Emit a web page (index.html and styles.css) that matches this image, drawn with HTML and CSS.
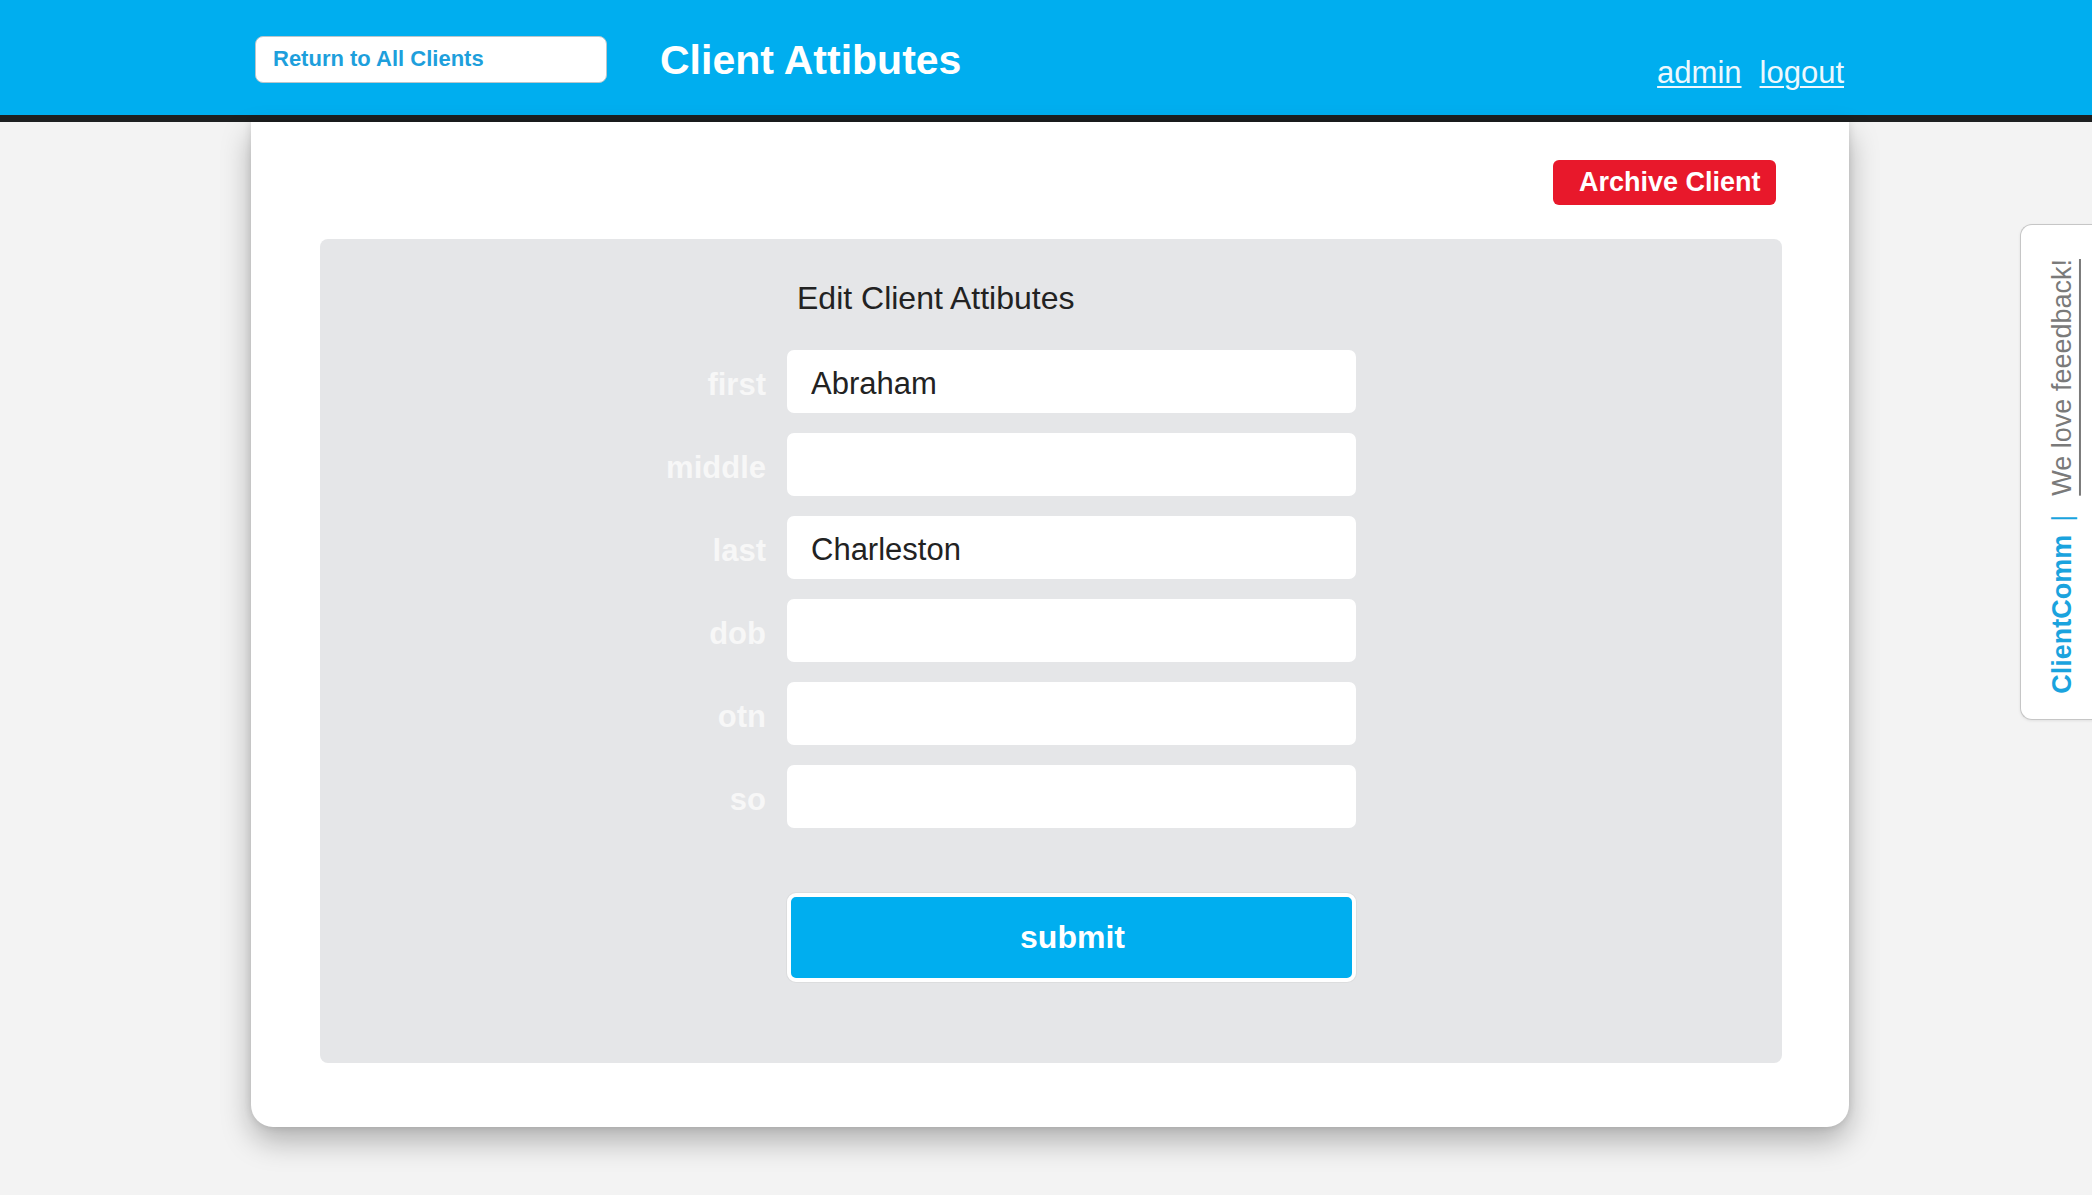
FILE: index.html
```html
<!DOCTYPE html>
<html lang="en">
<head>
<meta charset="utf-8">
<title>Client Attibutes</title>
<link rel="stylesheet" href="styles.css">
</head>
<body>
<header class="topbar">
  <div class="topbar-inner">
    <a class="return-btn" href="#">Return to All Clients</a>
    <h1 class="page-title">Client Attibutes</h1>
    <nav class="user-links">
      <a href="#">admin</a>
      <a href="#">logout</a>
    </nav>
  </div>
</header>

<main class="card">
  <div class="card-actions">
    <button class="archive-btn" type="button">Archive Client</button>
  </div>
  <section class="panel">
    <form class="client-form">
      <h2 class="form-title">Edit Client Attibutes</h2>
      <label class="field-label" for="f-first">first</label>
      <input class="field-input" id="f-first" type="text" value="Abraham">
      <label class="field-label" for="f-middle">middle</label>
      <input class="field-input" id="f-middle" type="text" value="">
      <label class="field-label" for="f-last">last</label>
      <input class="field-input" id="f-last" type="text" value="Charleston">
      <label class="field-label" for="f-dob">dob</label>
      <input class="field-input" id="f-dob" type="text" value="">
      <label class="field-label" for="f-otn">otn</label>
      <input class="field-input" id="f-otn" type="text" value="">
      <label class="field-label" for="f-so">so</label>
      <input class="field-input" id="f-so" type="text" value="">
      <button class="submit-btn" type="button">submit</button>
    </form>
  </section>
</main>

<aside class="feedback-tab">
  <span class="feedback-text"><span class="brand">ClientComm</span><span class="sep">|</span><a class="feedback-link" href="#">We love feeedback!</a></span>
</aside>
</body>
</html>
```

FILE: styles.css
```css
* {
  box-sizing: border-box;
}

html, body {
  margin: 0;
  padding: 0;
}

body {
  background: #f3f3f3;
  font-family: "Liberation Sans", Arial, Helvetica, sans-serif;
  color: #222;
  min-height: 1195px;
  overflow: hidden;
}

/* Header */
.topbar {
  background: #00aeef;
  height: 122px;
  border-bottom: 7px solid #1d1f20;
}

.topbar-inner {
  margin-left: 251px;
  width: 1598px;
  height: 115px;
  display: flex;
  align-items: center;
  padding-left: 4px;
  padding-right: 5px;
}

.return-btn {
  display: flex;
  align-items: center;
  width: 352px;
  height: 47px;
  margin-top: 3px;
  padding-left: 17px;
  background: #fff;
  border: 1px solid #b9c6cc;
  border-radius: 8px;
  color: #1e9fdc;
  font-weight: bold;
  font-size: 22px;
  text-decoration: none;
}

.page-title {
  margin: 6px 0 0 53px;
  color: #fff;
  font-size: 41px;
  font-weight: bold;
  line-height: 1;
}

.user-links {
  margin-left: auto;
  margin-top: 31px;
  display: flex;
  gap: 18px;
}

.user-links a {
  color: #eef8fd;
  font-size: 31px;
  text-decoration: underline;
  text-decoration-thickness: 2px;
  text-underline-offset: 3px;
}

/* Card */
.card {
  margin-left: 251px;
  width: 1598px;
  height: 1005px;
  background: #fff;
  border-radius: 0 0 22px 22px;
  box-shadow: 0 14px 30px rgba(0, 0, 0, 0.28), 0 0 8px rgba(0, 0, 0, 0.12);
  padding: 38px 67px 64px 69px;
  display: flex;
  flex-direction: column;
}

.card-actions {
  display: flex;
  justify-content: flex-end;
  padding-right: 6px;
  margin-bottom: 34px;
}

.archive-btn {
  width: 223px;
  height: 45px;
  border: none;
  border-radius: 6px;
  background: #e8182b;
  color: #fff;
  font-family: inherit;
  font-weight: bold;
  font-size: 27px;
  text-align: left;
  padding: 0 0 0 26px;
  cursor: pointer;
}

/* Form panel */
.panel {
  background: #e5e6e8;
  border-radius: 8px;
  height: 824px;
  padding: 41px 0 81px 0;
}

.client-form {
  display: grid;
  grid-template-columns: 446px 569px;
  column-gap: 21px;
  row-gap: 20px;
  align-items: center;
}

.form-title {
  grid-column: 2;
  margin: 0 0 14px 0;
  padding-left: 10px;
  font-size: 32px;
  font-weight: normal;
  line-height: 36px;
  color: #222;
}

.field-label {
  grid-column: 1;
  text-align: right;
  color: #f7f7f7;
  font-weight: bold;
  font-size: 31px;
  line-height: 36px;
  padding-top: 6px;
}

.field-input {
  grid-column: 2;
  height: 63px;
  border: none;
  border-radius: 7px;
  background: #fff;
  padding: 5px 0 0 24px;
  font-family: inherit;
  font-size: 31px;
  color: #222;
  outline: none;
}

.submit-btn {
  grid-column: 2;
  margin-top: 45px;
  height: 89px;
  border: 4px solid #fff;
  border-radius: 9px;
  background: #00aeef;
  color: #fff;
  font-family: inherit;
  font-weight: bold;
  font-size: 32px;
  padding-left: 8px;
  box-shadow: 0 0 0 1px rgba(0, 0, 0, 0.04);
  cursor: pointer;
}

/* Feedback tab */
.feedback-tab {
  position: absolute;
  top: 224px;
  left: 2020px;
  width: 90px;
  height: 496px;
  background: #fff;
  border: 1px solid #c6c6c6;
  border-right: none;
  border-radius: 12px 0 0 12px;
  box-shadow: 0 1px 3px rgba(0, 0, 0, 0.08);
  display: flex;
  align-items: flex-end;
  padding: 0 0 25px 26px;
}

.feedback-text {
  writing-mode: vertical-rl;
  transform: rotate(180deg);
  font-size: 27px;
  line-height: 30px;
  white-space: nowrap;
}

.brand {
  color: #1aa3de;
  font-weight: bold;
}

.sep {
  display: inline-block;
  color: #1aa3de;
  margin-block: 0;
  margin-inline: 13px 19px;
}

.feedback-link {
  color: #7a7a7a;
  text-decoration: underline;
  text-underline-offset: 3px;
}
```
